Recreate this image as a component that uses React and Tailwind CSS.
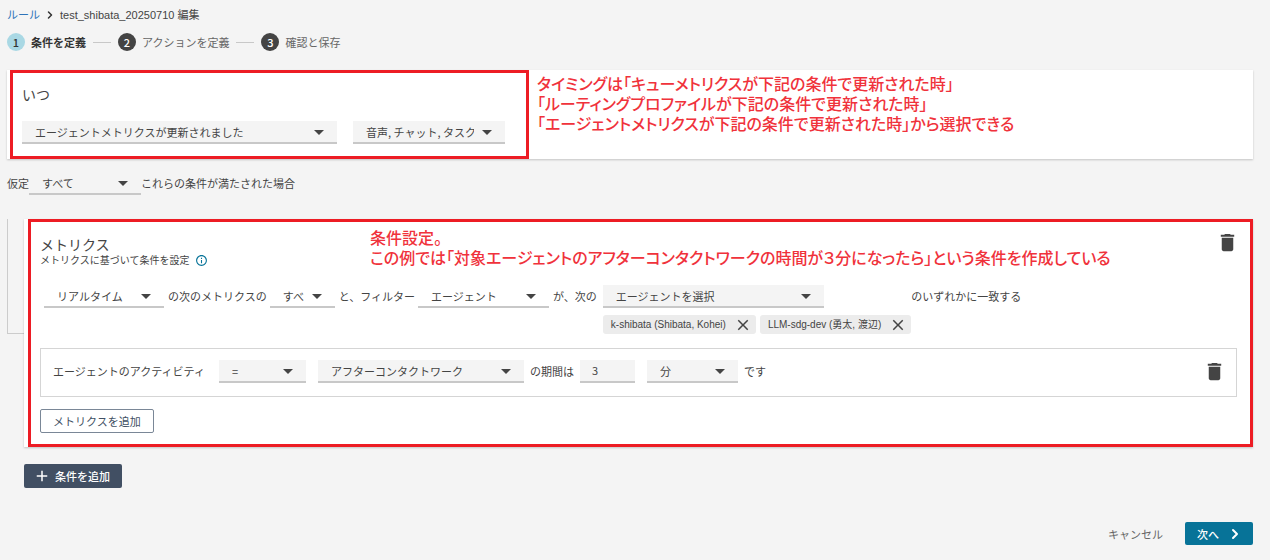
import React from "react";
import { MdAdd, MdArrowDropDown, MdClose, MdDelete, MdInfoOutline } from "react-icons/md";
import { ChevronRight } from "lucide-react";

const steps = ["条件を定義", "アクションを定義", "確認と保存"];
const agents = ["k-shibata (Shibata, Kohei)", "LLM-sdg-dev (勇太, 渡辺)"];

function Select({ label, value, className }) {
  return (
    <div className={`relative shrink-0 ${className}`}>
      <select
        aria-label={label}
        className="block h-[23px] w-full appearance-none rounded-none border-b-2 border-[#c8c8c8] bg-transparent pr-[31px] pl-[13px] text-[11px] text-[#444444] outline-none"
      >
        <option>{value}</option>
      </select>
      <MdArrowDropDown className="pointer-events-none absolute -top-px right-[6px] text-[24px] text-[#444444]" />
    </div>
  );
}

function Note({ children, className }) {
  return (
    <p className={`text-[16px] leading-[20px] font-medium text-[#f0323b] [font-feature-settings:'palt'] ${className}`}>
      {children}
    </p>
  );
}

function Steps() {
  return (
    <ol className="mt-[10px] flex items-center">
      {steps.map((step, i) => (
        <li key={step} className="flex items-center">
          {i > 0 && <span className="mx-[7px] h-px w-[18px] bg-[#c8c8c8]" />}
          <span
            className={`mr-[6px] flex size-[18px] items-center justify-center rounded-full text-[11px] font-medium ${
              i === 0 ? "bg-[#a9d8e4] text-[#333333]" : "bg-[#444444] text-white"
            }`}
          >
            {i + 1}
          </span>
          <span className={i === 0 ? "font-bold text-[#333333]" : "text-[#666666]"}>{step}</span>
        </li>
      ))}
    </ol>
  );
}

function MetricsCard() {
  return (
    <section className="min-w-0 flex-1 bg-white pl-1 shadow-[0_1px_2px_rgba(0,0,0,0.2)]">
      <div className="border-3 border-[#ed1c24] pr-[13px] pb-[11px] pl-[9px]">
        <div className="-mr-[2px] flex items-end pt-[5px]">
          <div className="w-[330px] shrink-0">
            <h2 className="text-[14px] leading-[18px]">メトリクス</h2>
            <p className="flex items-center gap-[6px] text-[10px] leading-[14px]">
              メトリクスに基づいて条件を設定
              <MdInfoOutline className="text-[13px] text-[#077398]" />
            </p>
          </div>
          <Note className="flex-1">
            条件設定。
            <br />
            この例では「対象エージェントのアフターコンタクトワークの時間が３分になったら」という条件を作成している
          </Note>
          <button type="button" aria-label="メトリクスを削除" className="self-start pt-1">
            <MdDelete className="text-[23px] text-[#444444]" />
          </button>
        </div>

        <div className="mt-[18px] flex items-start pl-1 leading-[23px]">
          <Select label="期間" value="リアルタイム" className="w-[120px]" />
          <span className="mr-[3px] ml-1">の次のメトリクスの</span>
          <Select label="一致" value="すべて" className="w-[65px]" />
          <span className="mr-[3px] ml-1">と、フィルター</span>
          <Select label="フィルター" value="エージェント" className="w-[131px]" />
          <span className="mr-[6px] ml-1">が、次の</span>
          <div>
            <Select label="エージェント" value="エージェントを選択" className="w-[221px] bg-[#f4f4f4]" />
            <ul className="mt-[7px] flex gap-1">
              {agents.map((agent) => (
                <li
                  key={agent}
                  className="flex h-[19px] items-center gap-2 rounded-[3px] bg-[#ececec] pr-1 pl-2 font-['Liberation_Sans','Noto_Sans_CJK_JP',sans-serif] text-[10px] leading-[19px]"
                >
                  {agent}
                  <button type="button" aria-label={`${agent} を削除`}>
                    <MdClose className="text-[18px]" />
                  </button>
                </li>
              ))}
            </ul>
          </div>
          <span>のいずれかに一致する</span>
        </div>

        <div className="mt-[14px] flex items-center border border-[#d5d5d5] pt-[11px] pr-[10px] pb-[13px] pl-3 leading-[23px]">
          <span>エージェントのアクティビティ</span>
          <Select label="演算子" value="=" className="ml-[14px] w-[87px] bg-[#f4f4f4]" />
          <Select label="アクティビティ" value="アフターコンタクトワーク" className="ml-3 w-[206px] bg-[#f4f4f4]" />
          <label htmlFor="duration" className="mx-[6px]">の期間は</label>
          <input
            id="duration"
            type="text"
            defaultValue="3"
            className="h-[23px] w-[55px] border-b-2 border-[#c8c8c8] bg-[#f4f4f4] pl-3 outline-none"
          />
          <Select label="単位" value="分" className="ml-3 w-[91px] bg-[#f4f4f4]" />
          <span className="ml-[6px]">です</span>
          <button type="button" aria-label="条件を削除" className="ml-auto">
            <MdDelete className="text-[23px] text-[#444444]" />
          </button>
        </div>

        <button
          type="button"
          className="mt-3 block h-6 rounded-[2px] border border-[#7a8797] px-3 text-[#414f63]"
        >
          メトリクスを追加
        </button>
      </div>
    </section>
  );
}

export default function App() {
  return (
    <main className="min-h-screen bg-[#f4f4f4] pt-[7px] pr-[17px] pb-[15px] pl-[7px] font-['Noto_Sans_CJK_JP',sans-serif] text-[11px] leading-[16px] text-[#444444]">
      <nav className="flex items-center font-['Liberation_Sans','Noto_Sans_CJK_JP',sans-serif]">
        <a href="#rules" className="text-[#2e73b8]">ルール</a>
        <ChevronRight className="mx-1 size-3 text-[#333333]" strokeWidth={3} />
        <span>test_shibata_20250710 編集</span>
      </nav>

      <Steps />

      <section className="mt-[19px] flex bg-white pl-[3px] shadow-[0_1px_2px_rgba(0,0,0,0.2)]">
        <div className="w-[519px] shrink-0 border-3 border-[#ed1c24] pt-[11px] pb-3 pl-[9px]">
          <h2 className="text-[14px] leading-[20px]">いつ</h2>
          <div className="mt-[17px] flex gap-4">
            <Select label="イベント" value="エージェントメトリクスが更新されました" className="w-[315px] bg-[#f4f4f4]" />
            <Select label="チャネル" value="音声, チャット, タスク" className="w-[152px] bg-[#f4f4f4]" />
          </div>
        </div>
        <Note className="pt-[3px] pl-2">
          タイミングは「キューメトリクスが下記の条件で更新された時」
          <br />
          「ルーティングプロファイルが下記の条件で更新された時」
          <br />
          「エージェントメトリクスが下記の条件で更新された時」から選択できる
        </Note>
      </section>

      <div className="mt-[13px] flex leading-[23px]">
        <span>仮定</span>
        <Select label="仮定" value="すべて" className="w-[112px]" />
        <span>これらの条件が満たされた場合</span>
      </div>

      <div className="mt-6 flex items-start">
        <div className="h-[115px] w-[17px] border-b border-l border-[#cccccc]" />
        <MetricsCard />
      </div>

      <button
        type="button"
        className="mt-[17px] ml-[17px] flex h-6 items-center gap-1 rounded-[2px] bg-[#414f63] pr-3 pl-[9px] font-medium text-white"
      >
        <MdAdd className="text-[18px]" />
        条件を追加
      </button>

      <div className="mt-[34px] flex items-center justify-end gap-[22px]">
        <button type="button" className="text-[#666666]">キャンセル</button>
        <button
          type="button"
          className="flex h-[23px] items-center gap-2 rounded-[2px] bg-[#077398] pr-[10px] pl-3 font-medium text-white"
        >
          次へ
          <ChevronRight className="size-4" strokeWidth={3} />
        </button>
      </div>
    </main>
  );
}
